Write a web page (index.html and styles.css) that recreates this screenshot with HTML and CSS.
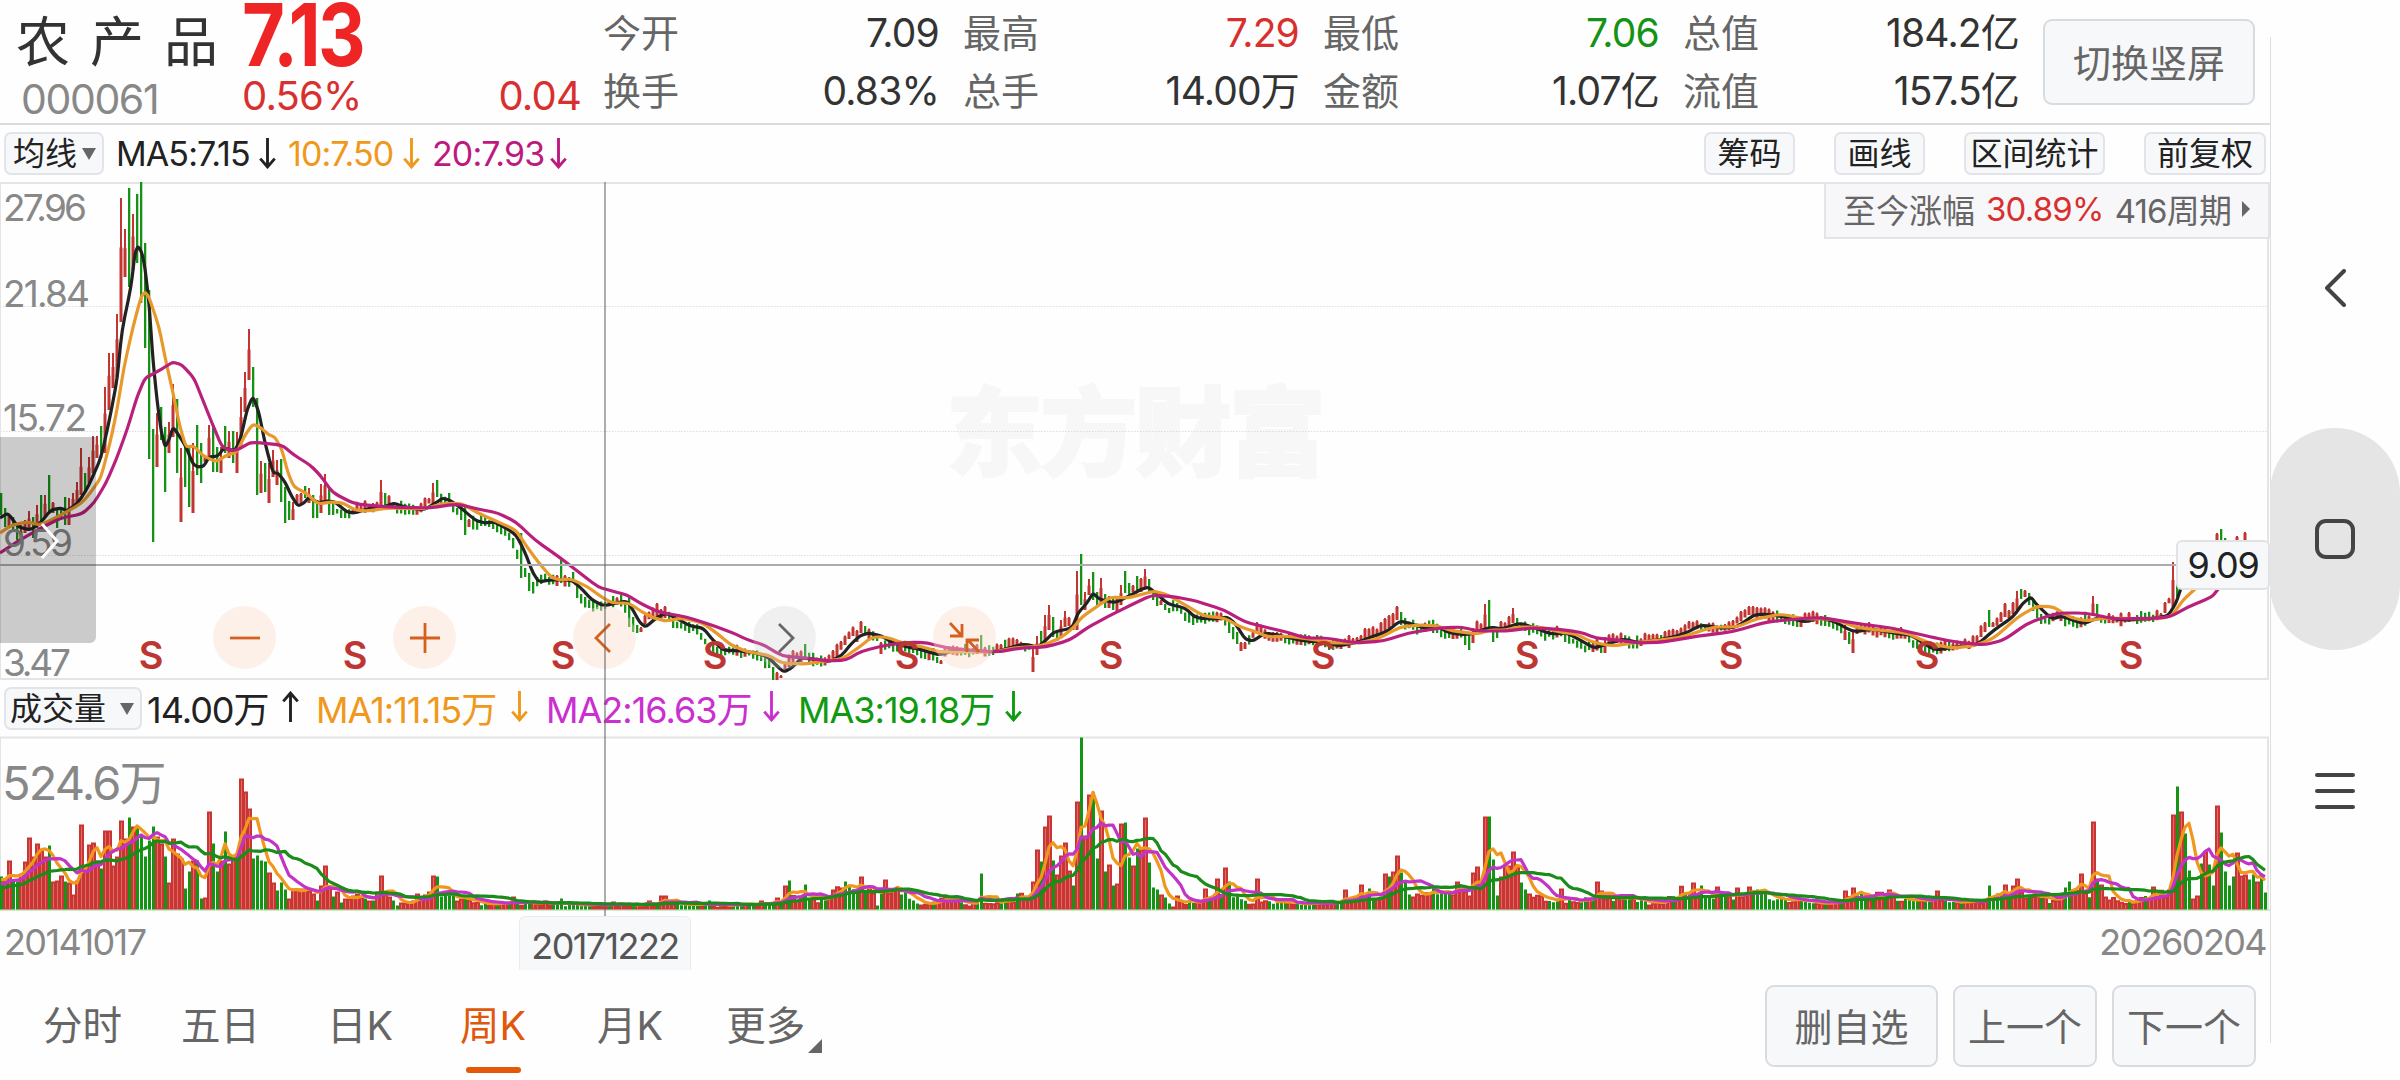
FILE: index.html
```html
<!DOCTYPE html>
<html lang="zh-CN">
<head>
    <meta charset="UTF-8">
    <meta name="viewport" content="width=device-width, initial-scale=1.0">
    <title>农产品 000061</title>
    <link rel="stylesheet" href="styles.css">
</head>
<body>
    <div class="app">
        <main>
            <header>
                <div class="stock">
                    <h1>农产品</h1>
                    <span class="code">000061</span>
                </div>
                <div class="price">
                    <strong>7.13</strong>
                    <div class="change"><span>0.56%</span><span>0.04</span></div>
                </div>
                <dl class="quotes">
                    <div><dt>今开</dt><dd>7.09</dd></div>
                    <div><dt>最高</dt><dd class="up">7.29</dd></div>
                    <div><dt>最低</dt><dd class="down">7.06</dd></div>
                    <div><dt>总值</dt><dd>184.2亿</dd></div>
                    <div><dt>换手</dt><dd>0.83%</dd></div>
                    <div><dt>总手</dt><dd>14.00万</dd></div>
                    <div><dt>金额</dt><dd>1.07亿</dd></div>
                    <div><dt>流值</dt><dd>157.5亿</dd></div>
                </dl>
                <button class="btn rotate">切换竖屏</button>
            </header>

            <div class="toolbar">
                <button class="chip pick">均线<i class="caret"></i></button>
                <div class="legend ma">
                    <span class="black">MA5:7.15<svg viewBox="0 0 16 30"><path d="M8 0V28M1 20L8 28L15 20"/></svg></span>
                    <span class="orange">10:7.50<svg viewBox="0 0 16 30"><path d="M8 0V28M1 20L8 28L15 20"/></svg></span>
                    <span class="magenta">20:7.93<svg viewBox="0 0 16 30"><path d="M8 0V28M1 20L8 28L15 20"/></svg></span>
                </div>
                <div class="tools">
                    <button class="chip">筹码</button>
                    <button class="chip">画线</button>
                    <button class="chip wide">区间统计</button>
                    <button class="chip adj">前复权</button>
                </div>
            </div>

            <div class="chart">
                <svg id="kline" viewBox="0 182 2270 498"></svg>
                <div class="range">至今涨幅 <b>30.89%</b> <em>416周期</em><i></i></div>
                <div class="handle"><svg viewBox="0 0 20 36"><path d="M2 1L17 18L2 35"/></svg></div>
                <div class="controls">
                    <button><svg viewBox="0 0 32 32"><path d="M1 16H31"/></svg></button>
                    <button><svg viewBox="0 0 32 32"><path d="M1 16H31M16 1V31"/></svg></button>
                    <button><svg viewBox="0 0 32 32"><path d="M21 2L7 16L21 30"/></svg></button>
                    <button class="off"><svg viewBox="0 0 32 32"><path d="M10 2L24 16L10 30"/></svg></button>
                    <button><svg viewBox="0 0 32 32"><path d="M1 1L12 13M13 2V14H1M30 30L19 18M18 30V18H30"/></svg></button>
                </div>
                <div class="price-tag">9.09</div>
            </div>

            <div class="toolbar vol-bar">
                <button class="chip pick">成交量<i class="caret"></i></button>
                <div class="legend vol">
                    <span class="black">14.00万<svg viewBox="0 0 16 30"><path d="M8 30V2M1 10L8 2L15 10"/></svg></span>
                    <span class="orange">MA1:11.15万<svg viewBox="0 0 16 30"><path d="M8 0V28M1 20L8 28L15 20"/></svg></span>
                    <span class="purple">MA2:16.63万<svg viewBox="0 0 16 30"><path d="M8 0V28M1 20L8 28L15 20"/></svg></span>
                    <span class="green">MA3:19.18万<svg viewBox="0 0 16 30"><path d="M8 0V28M1 20L8 28L15 20"/></svg></span>
                </div>
            </div>

            <div class="volume">
                <svg id="volume" viewBox="0 737 2270 173"></svg>
            </div>

            <div class="dates">
                <span>20141017</span>
                <span class="date-tag">20171222</span>
                <span>20260204</span>
            </div>

            <footer>
                <nav class="tabs">
                    <a>分时</a>
                    <a>五日</a>
                    <a>日K</a>
                    <a class="active">周K</a>
                    <a>月K</a>
                    <a class="more">更多</a>
                </nav>
                <div class="actions">
                    <button class="btn del">删自选</button>
                    <button class="btn">上一个</button>
                    <button class="btn">下一个</button>
                </div>
            </footer>
            <div class="crosshair"></div>
        </main>

        <aside>
            <svg class="back" viewBox="0 0 22 38"><path d="M20 2L3 19L20 36"/></svg>
            <div class="home"><svg viewBox="0 0 40 40"><rect x="2" y="2" width="36" height="36" rx="9"/></svg></div>
            <svg class="menu" viewBox="0 0 40 36"><path d="M2 2H38M2 18H38M2 34H38"/></svg>
        </aside>
    </div>
    <script src="chart.js"></script>
</body>
</html>
```
FILE: styles.css
```css
* {
    box-sizing: border-box;
}

body {
    margin: 0;
    background: #fefefe;
    font-family: Inter, "Noto Sans CJK SC", sans-serif;
    color: #333;
}

button {
    font-family: inherit;
    padding: 0;
    border: none;
    background: none;
    color: inherit;
}

.app {
    display: flex;
    width: 2400px;
    height: 1080px;
    overflow: hidden;
}

main {
    position: relative;
    width: 2270px;
    display: flex;
    flex-direction: column;
}

/* header */
header {
    height: 125px;
    display: flex;
    border-bottom: 2px solid #dcdcdc;
}

.stock {
    width: 242px;
    padding: 5px 0 0 16px;
}

.stock h1 {
    margin: 0;
    font-size: 54px;
    line-height: 76px;
    font-weight: 400;
    letter-spacing: 20px;
    white-space: nowrap;
}

.code {
    display: block;
    margin: -2px 0 0 5px;
    font-size: 41px;
    line-height: 40px;
    letter-spacing: -1.4px;
    color: #888;
}

.price {
    width: 339px;
    color: #d8302f;
}

.price strong {
    display: block;
    height: 70px;
    font-size: 87px;
    line-height: 70px;
    font-weight: 700;
    letter-spacing: -3px;
    color: #ef2424;
    transform: scaleX(0.85);
    transform-origin: 0 0;
}

.change {
    display: flex;
    justify-content: space-between;
    font-size: 40px;
    line-height: 52px;
    letter-spacing: -0.8px;
}

.quotes {
    margin: 0 0 0 22px;
    width: 1416px;
    height: 116px;
    display: grid;
    grid-template-columns: repeat(4, 336px);
    column-gap: 24px;
    grid-template-rows: 58px 58px;
    padding-top: 4px;
}

.quotes div {
    display: flex;
    justify-content: space-between;
    font-size: 38px;
    line-height: 58px;
}

.quotes dt {
    color: #666;
}

.quotes dd {
    margin: 0;
    font-size: 39px;
    letter-spacing: -0.8px;
}

.quotes .up {
    color: #d8302f;
}

.quotes .down {
    color: #149314;
}

.btn {
    height: 82px;
    width: 144px;
    padding-bottom: 4px;
    font-size: 38px;
    color: #666;
    background: #f7f8fa;
    border: 2px solid #d8dbe0;
    border-radius: 9px;
}

.rotate {
    margin: 19px 0 0 24px;
    width: 212px;
    height: 86px;
}

/* indicator rows */
.toolbar {
    height: 57px;
    display: flex;
    align-items: center;
    padding: 0 4px;
}

.chip {
    width: 91px;
    height: 43px;
    font-size: 32px;
    line-height: 38px;
    color: #222;
    background: #f7f8fa;
    border: 2px solid #e2e4e9;
    border-radius: 7px;
    white-space: nowrap;
}

.pick {
    width: 100px;
    display: flex;
    align-items: center;
    justify-content: space-between;
    padding: 0 6px 0 7px;
}

.vol-bar .pick {
    width: 138px;
    padding: 0 6px 0 4px;
}

.caret {
    border: 7px solid transparent;
    border-top: 12px solid #666;
    border-bottom: 0;
}

.legend {
    display: flex;
    margin-left: 12px;
    font-size: 34px;
    letter-spacing: -0.9px;
}

.legend span {
    display: flex;
    align-items: center;
    white-space: nowrap;
}

.legend svg {
    width: 17px;
    height: 31px;
    margin-left: auto;
    fill: none;
    stroke: currentColor;
    stroke-width: 2.8;
}

.ma span:nth-child(1) { width: 160px; margin-right: 12px; }
.ma span:nth-child(2) { width: 132px; margin-right: 12px; }
.ma span:nth-child(3) { width: 135px; }

.vol {
    margin: -4px 0 0 5px;
    font-size: 36px;
    letter-spacing: -1px;
}

.vol span:nth-child(1) { width: 152px; margin-right: 17px; }
.vol span:nth-child(2) { width: 212px; margin-right: 18px; }
.vol span:nth-child(3) { width: 234px; margin-right: 18px; }
.vol span:nth-child(4) { width: 224px; }

.black { color: #222; }
.orange { color: #f0981c; }
.magenta { color: #bd1a80; }
.purple { color: #cb2fd0; }
.green { color: #109a10; }

.tools {
    display: flex;
    margin-left: auto;
    gap: 39px;
}

.tools .wide { width: 141px; }
.tools .adj { width: 122px; }

/* k-line */
.chart {
    position: relative;
    height: 498px;
}

.chart > svg,
.volume > svg {
    display: block;
    width: 2270px;
    height: 100%;
    overflow: visible;
}

.range {
    position: absolute;
    top: 0;
    right: 0;
    width: 446px;
    height: 57px;
    padding: 0 0 4px 17px;
    border: 2px solid #e4e4e6;
    background: #f7f7fa;
    display: flex;
    align-items: center;
    font-size: 33px;
    color: #666;
    white-space: nowrap;
}

.range b {
    margin-left: 11px;
    font-weight: 400;
    letter-spacing: -0.8px;
    color: #d8302f;
}

.range em {
    margin-left: 11px;
    font-style: normal;
    letter-spacing: -0.8px;
}

.range i {
    margin-left: 11px;
    border: 8px solid transparent;
    border-left: 8px solid #666;
    border-right: 0;
}

.handle {
    position: absolute;
    left: 0;
    top: 255px;
    width: 96px;
    height: 206px;
    padding: 86px 0 0 40px;
    border-radius: 0 0 6px 0;
    background: rgba(0, 0, 0, 0.2);
}

.handle svg {
    width: 20px;
    height: 36px;
    fill: none;
    stroke: #fff;
    stroke-width: 3;
}

.controls {
    position: absolute;
    left: 213px;
    top: 424px;
    display: flex;
    gap: 117px;
}

.controls button {
    width: 63px;
    height: 63px;
    border-radius: 50%;
    background: rgba(252, 222, 205, 0.42);
    display: flex;
    align-items: center;
    justify-content: center;
}

.controls .off {
    background: rgba(205, 205, 210, 0.28);
}

.controls svg {
    width: 32px;
    height: 32px;
    fill: none;
    stroke: #d4601f;
    stroke-width: 2.8;
}

.controls .off svg {
    stroke: #666;
}

.price-tag {
    position: absolute;
    left: 2176px;
    top: 358px;
    width: 94px;
    height: 50px;
    border: 2px solid #e0e2e6;
    border-radius: 6px;
    background: #f7f8fa;
    font-size: 36px;
    line-height: 47px;
    text-align: center;
    letter-spacing: -1.2px;
    color: #222;
}

.volume {
    height: 174px;
}

.axis {
    font-size: 37px;
    letter-spacing: -1px;
    fill: #888;
}

.axis.big {
    font-size: 47px;
    letter-spacing: -1.5px;
}

.sell {
    font-size: 38px;
    font-weight: 600;
    fill: #bd3633;
    text-anchor: middle;
}

.watermark {
    font-size: 97px;
    font-weight: 900;
    fill: #f7f7f7;
    stroke: #f7f7f7;
    stroke-width: 2;
}

.line {
    fill: none;
    stroke-width: 3.2;
    stroke-linejoin: round;
}

/* dates */
.dates {
    display: flex;
    justify-content: space-between;
    height: 62px;
    padding: 0 4px;
    font-size: 36px;
    line-height: 62px;
    letter-spacing: -1.6px;
    color: #888;
}

.date-tag {
    position: absolute;
    left: 519px;
    top: 916px;
    width: 172px;
    height: 54px;
    text-align: center;
    line-height: 59px;
    color: #555;
    background: #f7f8fa;
    border: 1px solid #ececef;
    border-bottom: 0;
    border-radius: 6px 6px 0 0;
}

/* the vertical line runs through both charts */
.crosshair {
    position: absolute;
    left: 604px;
    top: 182px;
    width: 2px;
    height: 734px;
    background: rgba(90, 90, 90, 0.5);
}

/* bottom */
footer {
    display: flex;
    justify-content: space-between;
    padding: 12px 14px 0 43px;
}

.tabs {
    display: flex;
    font-size: 39.5px;
    line-height: 82px;
    color: #666;
}

.tabs a {
    position: relative;
    margin-right: 59px;
}

.tabs a:nth-child(2),
.tabs a:nth-child(3) {
    margin-right: 67px;
}

.tabs a:nth-child(4) {
    margin-right: 71px;
}

.tabs a:nth-child(5) {
    margin-right: 63px;
}

.tabs .active {
    color: #e0580c;
}

.tabs .active::after {
    content: "";
    position: absolute;
    left: 6px;
    top: 82px;
    width: 55px;
    height: 6px;
    border-radius: 3px;
    background: #e5580a;
}

.tabs .more::after {
    content: "";
    position: absolute;
    right: -17px;
    top: 54px;
    border-left: 14px solid transparent;
    border-bottom: 14px solid #666;
}

.actions {
    display: flex;
    gap: 15px;
}

.del {
    width: 173px;
}

/* system keys */
aside {
    position: relative;
    width: 130px;
    height: 1080px;
    display: flex;
    flex-direction: column;
    align-items: center;
    padding-top: 269px;
}

aside::before {
    content: "";
    position: absolute;
    left: 0;
    top: 37px;
    width: 1px;
    height: 1006px;
    background: #dedede;
}

aside svg {
    fill: none;
    stroke: #444;
    stroke-width: 4;
    stroke-linecap: round;
    stroke-linejoin: round;
}

.back {
    width: 22px;
    height: 38px;
}

.home {
    position: relative;
    width: 130px;
    height: 222px;
    margin: 121px 0 123px;
    border-radius: 65px;
    background: #e5e5e5;
    display: flex;
    align-items: center;
    justify-content: center;
}

.home svg {
    width: 40px;
    height: 40px;
}

.menu {
    width: 40px;
    height: 36px;
}
```
FILE: chart.js
```js
const NS = 'http://www.w3.org/2000/svg';
const RED = '#c23632';
const GREEN = '#149314';
const STEP = 4;
const COUNT = 567;

let seed = 61;
function rnd() {
    seed = (seed * 16807) % 2147483647;
    return seed / 2147483647;
}

function add(parent, name, attrs, text) {
    const el = document.createElementNS(NS, name);
    for (const k in attrs) el.setAttribute(k, attrs[k]);
    if (text) el.textContent = text;
    parent.appendChild(el);
}

// "x,y x,y ..." -> [[x, y], ...]
function parse(str) {
    return str.trim().split(/\s+/).map(p => p.split(',').map(Number));
}

function at(points, x) {
    for (let i = 1; i < points.length; i++) {
        if (x <= points[i][0]) {
            const [x0, y0] = points[i - 1], [x1, y1] = points[i];
            return y0 + (y1 - y0) * (x - x0) / (x1 - x0);
        }
    }
    return points[points.length - 1][1];
}

// rounded line through the points
function smooth(points) {
    let d = 'M' + points[0];
    for (let i = 1; i < points.length - 1; i++) {
        const [x, y] = points[i], [nx, ny] = points[i + 1], [px, py] = points[i - 1];
        d += `L${px * .3 + x * .7},${py * .3 + y * .7}Q${x},${y} ${nx * .3 + x * .7},${ny * .3 + y * .7}`;
    }
    return d + 'L' + points[points.length - 1];
}

const ma5 = parse(`0,518 8,513 18,527 31,530 41,522 51,510 61,508 67,511 78,503 88,487 101,458 110,417 117,380 122,330 131,287 135,253
138,246 142,253 145,268 149,303 153,360 157,400 161,430 165,447 169,440 173,427 180,437 186,447 193,464 198,467 204,466 209,457
218,456 224,448 235,451 241,437 247,410 253,396 259,413 265,443 273,473 278,473 285,482 292,497 298,506 304,503 309,497 318,503
327,501 335,502 347,512 355,513 367,509 384,507 394,503 404,507 424,510 437,502 443,498 451,501 461,508 475,520 484,523 494,522
506,528 516,535 524,550 533,573 539,582 549,580 571,580 580,587 592,600 604,606 616,603 627,601 633,610 640,623 646,627 656,618 666,613
678,619 690,626 703,628 713,640 723,650 740,651 756,653 768,657 778,667 784,672 793,667 801,658 813,659 829,662 842,655 852,643 860,636
868,633 882,636 891,642 907,647 919,649 929,652 940,655 956,650 972,651 993,652 1009,648 1023,644 1038,647 1046,640 1054,632 1072,628
1078,613 1087,603 1093,593 1099,599 1115,603 1131,595 1140,590 1148,587 1156,593 1168,604 1185,608 1196,618 1216,619 1227,617
1235,623 1245,639 1253,641 1265,633 1278,635 1294,639 1306,641 1322,642 1339,646 1359,642 1371,637 1386,632 1400,621 1412,624
1424,628 1437,626 1449,633 1469,635 1490,627 1502,629 1520,623 1535,628 1551,634 1567,633 1580,640 1594,648 1604,645 1624,639
1640,643 1674,637 1688,632 1701,625 1720,628 1737,627 1754,615 1766,614 1785,617 1805,622 1819,618 1834,621 1853,632 1873,629
1892,633 1911,635 1926,645 1936,650 1955,647 1977,645 1994,630 2013,617 2023,603 2031,597 2037,605 2052,619 2062,616 2083,624
2100,617 2125,620 2149,619 2168,616 2176,603 2181,588`);

const ma10 = parse(`0,533 12,525 27,522 41,525 61,515 82,503 94,488 101,477 110,443 117,410 124,367 133,327 141,297 145,292 149,297 159,327
165,357 173,393 180,427 186,447 194,446 202,455 216,462 227,455 237,452 245,435 253,424 261,428 269,435 275,437 282,450 288,473
294,487 306,493 318,504 331,502 343,503 355,510 367,511 388,508 424,509 441,504 461,503 478,513 498,522 516,530 527,547 539,563
551,577 559,580 571,579 588,587 600,596 612,603 629,603 642,612 654,618 666,621 682,618 703,623 719,635 731,645 748,652 768,655
782,663 805,664 825,661 842,659 858,648 872,637 886,637 903,643 923,647 940,652 968,652 993,652 1013,648 1042,646 1062,637
1074,627 1082,617 1099,605 1111,597 1127,598 1140,595 1154,591 1168,595 1180,602 1204,616 1224,618 1241,627 1253,631 1269,637
1286,636 1310,639 1335,643 1359,643 1380,638 1400,627 1420,625 1437,626 1453,631 1478,634 1490,630 1506,630 1518,627 1543,627
1559,632 1576,634 1592,642 1612,646 1640,642 1679,638 1713,627 1737,627 1756,619 1781,614 1805,619 1834,619 1858,628 1907,633
1926,642 1950,648 1974,646 1994,638 2018,617 2037,606 2054,607 2069,617 2086,621 2105,618 2149,619 2171,617 2183,600 2195,589`);

const ma20 = parse(`0,553 20,540 41,528 61,518 82,514 94,503 106,483 116,460 127,430 137,397 145,378 155,373 165,367 173,362 182,365
194,378 204,403 212,423 222,447 233,451 241,448 251,442 282,445 294,455 310,465 320,475 333,493 355,504 388,507 429,508 457,504
478,509 498,513 516,522 535,540 559,557 580,573 598,587 612,591 627,595 640,603 658,612 687,617 711,625 731,632 748,640 764,645
782,656 805,658 829,661 846,660 862,651 887,645 911,642 927,643 948,648 968,650 997,652 1021,648 1046,647 1070,640 1087,628
1107,617 1131,605 1152,595 1176,597 1196,601 1224,610 1245,622 1265,627 1286,632 1306,638 1327,638 1355,643 1384,641 1408,633
1441,628 1461,627 1478,631 1506,631 1531,628 1555,629 1580,632 1596,638 1616,640 1640,643 1664,642 1698,636 1732,632 1766,622
1819,617 1853,623 1892,628 1931,637 1955,642 1984,645 2004,640 2028,623 2057,613 2086,613 2115,619 2168,618 2188,607 2212,597 2219,588`);

// colour, high, low for the first weeks
const opening = `g493,515 g508,527 r515,527 g517,530 g523,540 r525,540 r520,533 r511,530 g517,538 r505,528 g495,523 r495,517
g475,513 r502,513 g508,528 g507,520 g497,525 r498,525 r493,508 r482,502 r448,495 g473,490 r457,483 r436,473 r436,458 g426,458
r387,453 r353,410 r353,388 r314,377 r198,322 r229,277 g188,287 r214,270 g194,263 g182,303 g243,348 g290,459 g429,542 r413,467
g407,440 g427,492 r422,453 r384,437 g399,473 r448,522 g447,487 g447,507 r443,513 g425,475 g443,483 r455,462 r425,457 g425,472
g447,472 r447,473 g426,453 r431,458 g431,463 r432,473 r397,447 r372,412 r329,380 g367,407 g398,495 r461,493 g463,492 r463,503
r450,477 r460,485 g459,502 g487,523 g501,520 r502,520 r494,505 r493,505 g486,498 r488,503 g495,518 g500,518 r484,513 r474,502
g488,515 g502,515`.split(/\s+/);

// weeks that stand out later on, keyed by x
const peaks = `381r480,510 385g493,508 433r483,507 437g480,497 449g493,506 465g505,535 469r519,527 521g533,578 525g568,577 529g573,591
561g560,583 573g572,583 629g597,627 633g617,632 637g625,633 641r627,632 657r603,617 661r609,619 665r606,618 673g618,628 773g667,680 777r672,680
769g655,668 781r675,678 805g644,657 857r630,642 861r621,633 865g626,634 881r642,654 937g657,663 941r660,664 981g635,652 1033r647,672
1037r636,655 1041g631,645 1045r615,643 1049r605,630 1053g617,637 1057g631,641 1061r620,636 1065r611,627 1069r617,626 1073r625,630
1077r571,630 1081g554,605 1085r592,610 1089r579,595 1093g572,600 1097g592,606 1101r578,603 1105g594,608 1109r596,608
1113g596,610 1117r598,611 1121r585,605 1125g571,593 1129g583,597 1133r585,592 1137g576,590 1141r578,592 1145r569,588 1149g579,593
1153g592,600 1157g595,606 1161r600,605 1165g604,610 1169g608,613 1229g619,633 1237g632,644 1241r642,651 1245r642,649 1257r622,633
1381r622,634 1385r618,631 1389r615,628 1393r613,625 1397r606,620 1401g612,625 1465g634,645 1469g635,650 1473r628,643 1485r604,630
1489g600,627 1493g628,642 1497g632,638 1513r608,623 1517g618,630 1589g640,650 1593r643,652 1601g644,653 1605r637,653 1749r606,615 1845r625,640
1849g632,644 1853r630,653 1985r622,632 1989g610,627 1993r622,627 2001r612,622 2005r603,617 2009r610,618 2013r602,614 2017r591,610
2021g589,599 2025r590,597 2029g593,605 2033g600,611 2037g605,618 2041g614,624 2093r596,615 2097g604,617 2173r562,607 2177g565,597
2217r533,545 2221g529,545 2225g538,545 2237r536,545 2245r532,545`.trim().split(/\s+/);

const special = {};
opening.forEach((s, i) => special[i] = s);
peaks.forEach(s => {
    const m = s.match(/^(\d+)(.*)$/);
    special[Math.round((m[1] - 1) / STEP)] = m[2];
});

function drawKline() {
    const svg = document.getElementById('kline');
    add(svg, 'text', { class: 'watermark', x: 946, y: 468, textLength: 380 }, '东方财富');
    [306.5, 431.5, 555.5].forEach(y =>
        add(svg, 'path', { d: `M0 ${y}H2268`, stroke: '#dcdcdc', 'stroke-dasharray': '1.5 1.5' }));
    add(svg, 'path', { d: 'M0 183H2268V679H0', fill: 'none', stroke: '#e4e4e4', 'stroke-width': 2 });
    add(svg, 'path', { d: 'M0.5 182V679', stroke: '#e4e4e4' });

    let red = '', green = '';
    for (let i = 0; i < COUNT; i++) {
        const x = 1 + i * STEP;
        let up, hi, lo;
        if (special[i]) {
            up = special[i][0] === 'r';
            [hi, lo] = special[i].slice(1).split(',').map(Number);
        } else {
            if (x > 2172) continue;
            const mid = at(ma5, x + 6);
            const slope = at(ma5, x + 8) - at(ma5, x - 4);
            up = rnd() * 8 - 4 > slope;
            hi = mid - 2 - rnd() * 6 + slope * 0.3;
            lo = mid + 2 + rnd() * 4 + slope * 0.3;
        }
        if (up) {
            // rising weeks have a slightly wider body under the wick
            const body = lo - hi > 14 ? hi + (lo - hi) * 0.4 : hi + 1;
            red += `M${x - 1} ${hi}h2V${body}h.5V${lo}h-3V${body}h.5z`;
        } else {
            green += `M${x - 1} ${hi}h2.3V${lo}h-2.3z`;
        }
    }
    add(svg, 'path', { d: red, fill: RED });
    add(svg, 'path', { d: green, fill: GREEN });

    add(svg, 'path', { class: 'line', d: smooth(ma5), stroke: '#222' });
    add(svg, 'path', { class: 'line', d: smooth(ma10), stroke: '#e8992c' });
    add(svg, 'path', { class: 'line', d: smooth(ma20), stroke: '#b8207c' });
    add(svg, 'path', { d: 'M0 565H2178', stroke: '#acacac', 'stroke-width': 2 });

    [['27.96', 221, 83], ['21.84', 307, 86], ['15.72', 431, 83], ['9.59', 556, 69], ['3.47', 676, 67]].forEach(([t, y, w]) =>
        add(svg, 'text', { class: 'axis', x: 3, y: y, textLength: w }, t));
    [151, 355, 563, 715, 907, 1111, 1323, 1527, 1731, 1927, 2131].forEach(x =>
        add(svg, 'text', { class: 'sell', x: x, y: 669 }, 'S'));
}

// colour + bar height
const early = `g33 r29 r49 g29 g28 r36 r48 r72 r53 r66 r59 r53 g64 r28 r29 r34 g28 r27 r15 r29 r85 r43 r65 r67 r49 g41 r79 r79 r44 r53 r89
r71 g92 r83 g83 g73 g53 g69 g83 r73 r66 g53 r27 r71 r56 r51 g21 g38 r49 g49 g11 r12 r98 g66 g38 r49 g78 r46 r53 g53 r131 r118 r101 g51
g54 g49 g48 r37 r27 g19 g27 g20 r11 r21 r21 r21 r21 r19 r16 g9 r24 r44 r23 g13 r18 g7 r11 r11 r14 r16 r13 g11 r9 g9 r18 r34 r18 r13 g9
g4 r7 r7 r8 r9 r16 r13 r15 r18 r34 g33 g13 g14 g14 g14 r9 r11 g11 r10`.split(/\s+/);

const level = parse(`460,9 480,6 530,6 560,5 600,5 640,6 680,6 720,4 770,7 790,14 800,12 815,8 835,22 860,20 885,17 900,18 915,8 930,6 942,15
955,14 965,4 978,10 990,6 1020,14 1029,9 1080,40 1158,10 1180,7 1200,12 1215,16 1235,13 1246,6 1262,12 1275,7 1300,6 1335,7 1350,14
1380,12 1410,14 1440,18 1470,17 1530,14 1550,10 1580,10 1600,12 1630,11 1645,7 1665,9 1680,19 1700,18 1725,12 1750,17 1775,12
1800,9 1840,8 1855,15 1880,15 1910,9 1950,8 1975,8 1995,16 2020,19 2036,13 2050,9 2070,18 2090,14 2110,11 2130,9 2150,14 2170,20`);

const spikes = `513r13 533r9 545r9 561g11 613r8 649r9 659r14 663r14 709g9 761r9 777r12 785r24 789g29 805g25 845g28 861r33 877g4 885r30 981g36 1033r28
1037r60 1041g48 1045r83 1049r94 1053g49 1057r35 1061r54 1065r67 1069r39 1073g24 1077r108 1081g172 1085r74 1089r115 1093g117 1097g51
1101r99 1105g38 1109r45 1113g24 1117r26 1121r86 1125g87 1129g52 1133r44 1137g61 1141r60 1145r92 1149g47 1153g22 1157g20 1161r15
1165g12 1169g6 1173r3 1177r14 1205r21 1217r31 1225r42 1229g28 1257r31 1345r20 1361r25 1369g21 1385r36 1389g33 1393r38 1397r54 1401g37
1405g29 1409g15 1413r13 1457r28 1461r24 1473r37 1477r43 1481r24 1485r93 1489g93 1493g50 1497g14 1501r33 1505r43 1509r44 1513r58 1517r43
1521g27 1525g20 1529r16 1561r21 1597r28 1601r19 1693r27 1701g24 1717r23 1737r22 1749r23 1757g20 1845r19 1853r22 1889r20 1937r19 1989g24
2005r25 2013r24 2017r31 2065g22 2069g28 2073r20 2081r36 2085r17 2093r88 2097g31 2101r25 2105r13 2109r10 2153r23 2173r95 2177g123
2181r98 2185g76 2189g39 2193r11 2197r14 2201g46 2205r58 2209g45 2213g24 2217r104 2221g77 2225g38 2229g24 2233g33 2237r57 2241r34
2245r35 2249g30 2253g35 2257r28 2261g36 2265g17`.split(/\s+/);

function average(values, n, start) {
    let d = '';
    for (let i = 0; i < values.length; i++) {
        let sum = 0;
        for (let k = 0; k < n; k++) sum += i - k < 0 ? start : values[i - k];
        d += (i ? 'L' : 'M') + (1 + i * STEP) + ',' + (909 - sum / n).toFixed(1);
    }
    return d;
}

function drawVolume() {
    const svg = document.getElementById('volume');
    const bars = {};
    early.forEach((s, i) => bars[i] = s);
    spikes.forEach(s => {
        const m = s.match(/^(\d+)(.*)$/);
        bars[Math.round((m[1] - 1) / STEP)] = m[2];
    });
    add(svg, 'path', { d: 'M0 737H2268V910', fill: 'none', stroke: '#e4e4e4', 'stroke-width': 2 });
    add(svg, 'path', { d: 'M0.5 737V910', stroke: '#e4e4e4' });

    const values = [];
    let red = '', core = '', green = '', run = true;
    for (let i = 0; i < COUNT; i++) {
        const x = i * STEP;
        let h;
        if (bars[i]) {
            run = bars[i][0] === 'r';
            h = Number(bars[i].slice(1));
        } else {
            if (rnd() < 0.35) run = !run;
            h = at(level, x) * (0.65 + rnd() * 0.6);
        }
        values.push(h);
        if (run) {
            red += `M${x - 1} 909v${-h}h5v${h}z`;
            if (h > 6) core += `M${x + 1.5} 908V${911 - h}`;
        } else {
            green += `M${x} 909v${-h}h3v${h}z`;
        }
    }
    add(svg, 'path', { d: 'M0 909.5H2270', stroke: '#cdeccb', 'stroke-width': 2 });
    add(svg, 'path', { d: green, fill: GREEN });
    add(svg, 'path', { d: red, fill: '#c93532' });
    add(svg, 'path', { d: core, stroke: '#e06a66', 'stroke-width': 1 });

    add(svg, 'path', { class: 'line', d: average(values, 5, 29), stroke: '#f0981c' });
    add(svg, 'path', { class: 'line', d: average(values, 10, 25), stroke: '#c234c8' });
    add(svg, 'path', { class: 'line', d: average(values, 20, 21), stroke: '#1a8c1a' });
    add(svg, 'text', { class: 'axis big', x: 2, y: 799, textLength: 163 }, '524.6万');
}

drawKline();
drawVolume();
```
